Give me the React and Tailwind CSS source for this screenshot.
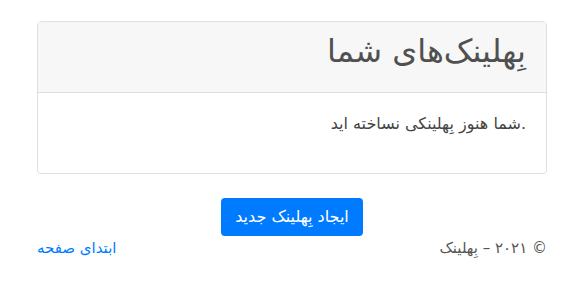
export default function App() {
    return (
        <div dir="rtl" className="min-h-screen bg-white pt-[21px] pl-[37px] pr-[31px] font-['DejaVu_Sans',sans-serif] text-[#212529]">
            <div className="rounded border border-[#dfdfdf] bg-white">
                <div className="h-[71px] bg-[#f7f7f7] border-b border-[#dfdfdf] px-5 pt-[9px]">
                    <h2 className="text-[32px] leading-[40px] text-[#505050]">بِهلینک‌های شما</h2>
                </div>
                <div className="h-[80px] px-5 pt-[19px]">
                    <p dir="ltr" className="text-right text-[16px] leading-6 text-[#444]">شما هنوز بِهلینکی نساخته اید.</p>
                </div>
            </div>
            <div className="flex justify-center mt-6">
                <button className="h-[38px] w-[142px] rounded bg-[#007bff] text-white text-[16px]">ایجاد بِهلینک جدید</button>
            </div>
            <div className="flex justify-between text-[15px] leading-6">
                <span className="text-[#555]">© ۲۰۲۱ – بِهلینک</span>
                <a href="#" className="text-[#007bff]">ابتدای صفحه</a>
            </div>
        </div>
    );
}
